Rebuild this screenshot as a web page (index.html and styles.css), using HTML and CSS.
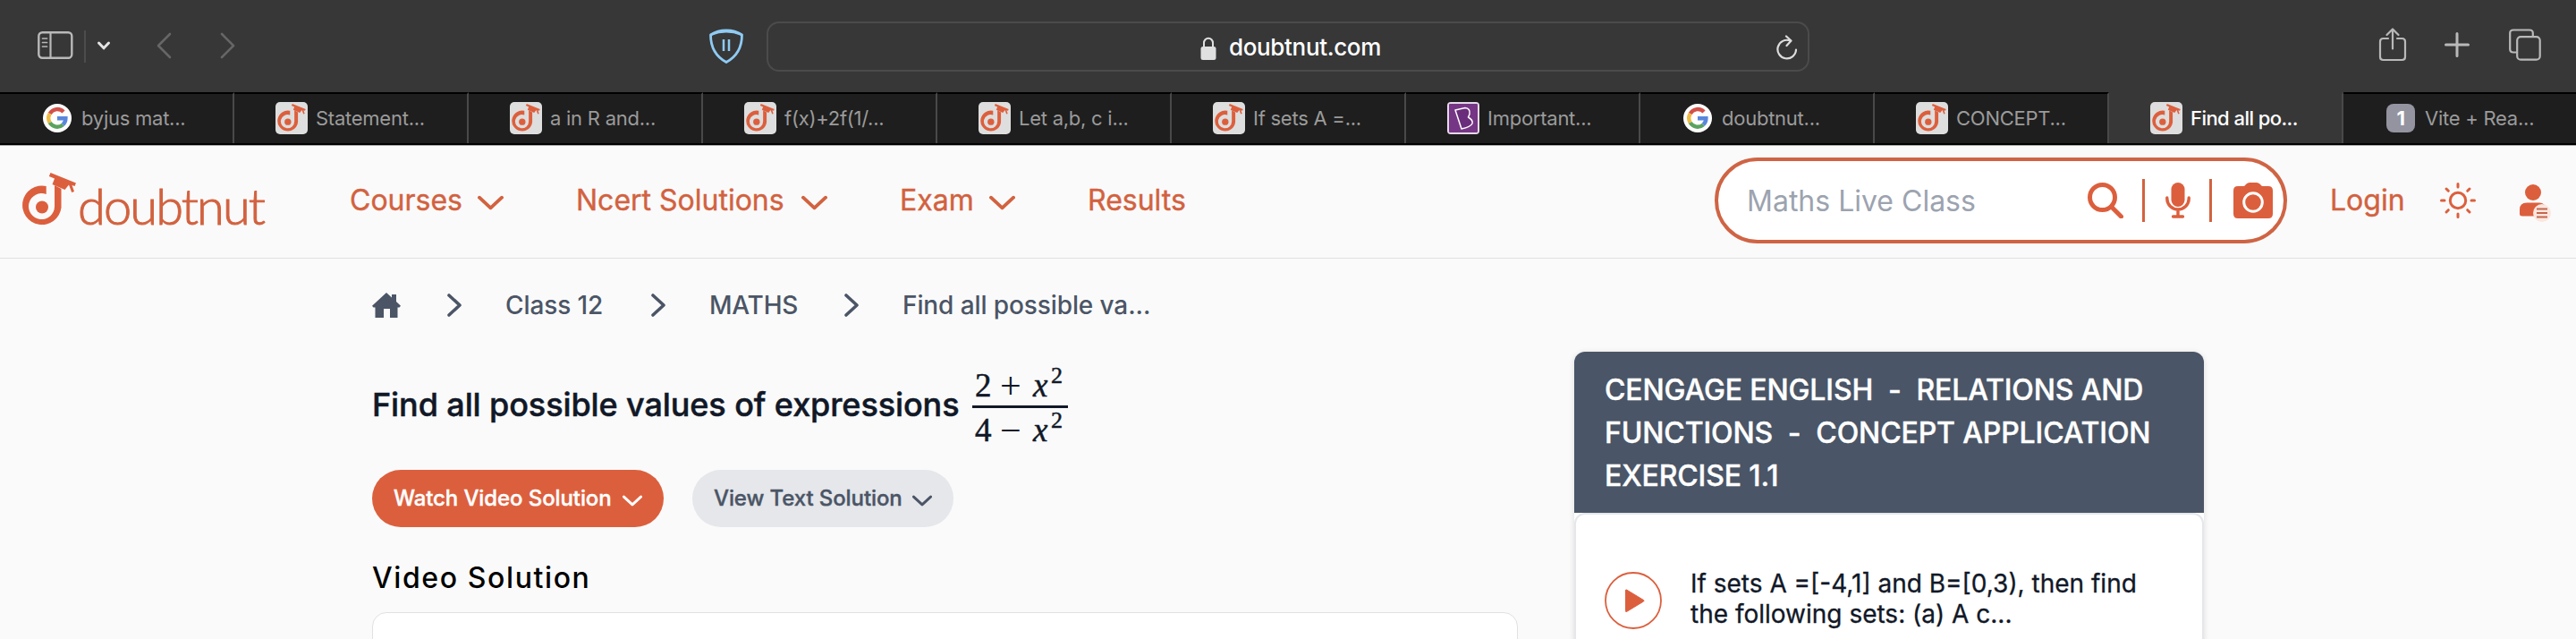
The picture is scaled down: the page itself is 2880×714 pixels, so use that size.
FILE: index.html
```
<!DOCTYPE html>
<html lang="en">
<head>
<meta charset="utf-8">
<title>Find all possible values of expressions</title>
<link rel="stylesheet" href="styles.css">
</head>
<body>
<svg class="defs" width="0" height="0" aria-hidden="true">
  <symbol id="dmark" viewBox="0 0 60 61">
    <path d="M26.700 15V24A14.500 14.500 0 1 0 36 37.500V14L43.500 18V39A21.800 21.800 0 1 1 26.700 15Z" fill="#dc5f3d"/>
    <circle cx="22" cy="38.500" r="7" fill="#dc5f3d"/>
    <path d="M31.500 0L60 11.500L58.500 15L55.500 14L58 21L55.200 22L52 13.500L47.500 19L33.500 13L36 6.500L29.800 4Z" fill="#dc5f3d"/>
  </symbol>
  <symbol id="google" viewBox="0 0 32 32">
    <circle cx="16" cy="16" r="16" fill="#fff"/>
    <g fill="none" stroke-width="4.400">
      <path d="M23 9A9.600 9.600 0 0 0 7.700 11" stroke="#d2524a"/>
      <path d="M7.700 11A9.600 9.600 0 0 0 7.700 21" stroke="#eebb45"/>
      <path d="M7.700 21A9.600 9.600 0 0 0 22.300 23.300" stroke="#5aa35f"/>
      <path d="M22.300 23.300A9.600 9.600 0 0 0 25.400 16.200H16" stroke="#5a87dc"/>
    </g>
  </symbol>
  <symbol id="down" viewBox="0 0 30 16"><path d="M2 2L15 14L28 2" fill="none" stroke="currentColor" stroke-width="4" stroke-linecap="round" stroke-linejoin="round"/></symbol>
  <symbol id="next" viewBox="0 0 16 26"><path d="M2 2L14 13L2 24" fill="none" stroke="currentColor" stroke-width="3.600" stroke-linecap="round" stroke-linejoin="round"/></symbol>
</svg>

<div class="toolbar">
  <div class="tools-left">
    <svg class="ic-sidebar" width="40" height="32" viewBox="0 0 40 32" fill="none" stroke="#b9b9b9">
      <rect x="1.300" y="1.300" width="37" height="28.500" rx="4" stroke-width="2.400"/>
      <path d="M14.500 1V30" stroke-width="2.200"/>
      <path d="M5.500 8H10.500M5.500 12.500H10.500M5.500 17H10.500" stroke-width="1.700" stroke-linecap="round"/>
    </svg>
    <span class="tool-sep"></span>
    <svg class="ic-menu" width="16" height="12" viewBox="0 0 16 12"><path d="M2.500 3L8 8.800L13.500 3" fill="none" stroke="#e4e4e4" stroke-width="3" stroke-linecap="round" stroke-linejoin="round"/></svg>
    <svg class="ic-back" width="18" height="30" viewBox="0 0 18 30"><path d="M16 2L3 15L16 28" fill="none" stroke="#666" stroke-width="2.600" stroke-linecap="round" stroke-linejoin="round"/></svg>
    <svg class="ic-fwd" width="18" height="30" viewBox="0 0 18 30"><path d="M2 2L15 15L2 28" fill="none" stroke="#666" stroke-width="2.600" stroke-linecap="round" stroke-linejoin="round"/></svg>
  </div>
  <svg class="ic-shield" width="40" height="40" viewBox="0 0 40 40" fill="none" stroke="#8fcaf3">
    <path d="M20 2Q10 2 2.500 7Q2.500 28 20 37.500Q37.500 28 37.500 7Q30 2 20 2Z" stroke-width="2.800" stroke-linejoin="round"/>
    <path d="M3 6.500Q20 0 37 6.500" stroke-width="2.500"/>
    <path d="M17 12V25M23 12V25" stroke-width="2.500"/>
  </svg>
  <div class="address">
    <svg class="ic-lock" width="18" height="26" viewBox="0 0 18 26"><path d="M4 12V7A5 5.300 0 0 1 14 7V12" fill="none" stroke="#e0e0e0" stroke-width="2"/><rect x="0.500" y="11" width="17" height="15" rx="2.500" fill="#e0e0e0"/></svg>
    <span class="host">doubtnut.com</span>
    <svg class="ic-reload" width="24" height="28" viewBox="0 0 24 28" fill="none" stroke="#dcdcdc" stroke-width="2.200" stroke-linecap="round" stroke-linejoin="round"><path d="M22 16.500A10.300 10.300 0 1 1 15.500 6.500"/><path d="M11 1.500L16.500 6.500L11.500 12"/></svg>
  </div>
  <div class="tools-right">
    <svg width="32" height="40" viewBox="0 0 32 40" fill="none" stroke="#b9b9b9" stroke-width="2.200" stroke-linecap="round" stroke-linejoin="round"><path d="M11 13H5.500Q2 13 2 16.500V33.500Q2 37 5.500 37H26.500Q30 37 30 33.500V16.500Q30 13 26.500 13H21M16 24.500V2.500M9.500 9L16 2.500L22.500 9"/></svg>
    <svg width="28" height="28" viewBox="0 0 28 28"><path d="M14 1.500V26.500M1.500 14H26.500" stroke="#b9b9b9" stroke-width="3" stroke-linecap="round"/></svg>
    <svg width="36" height="36" viewBox="0 0 36 36" fill="none" stroke="#b9b9b9" stroke-width="2.200"><rect x="9.200" y="9.200" width="25.500" height="25.500" rx="4"/><path d="M9.500 26.500H5Q1.200 26.500 1.200 23V5Q1.200 1.500 5 1.500H23Q26.800 1.500 26.800 5V9"/></svg>
  </div>
</div>

<div class="tabs">
  <div class="tab"><svg class="fav round"><use href="#google"/></svg><span>byjus mat...</span></div>
  <div class="tab"><span class="fav tile"><svg><use href="#dmark"/></svg></span><span>Statement...</span></div>
  <div class="tab"><span class="fav tile"><svg><use href="#dmark"/></svg></span><span>a in R and...</span></div>
  <div class="tab"><span class="fav tile"><svg><use href="#dmark"/></svg></span><span>f(x)+2f(1/...</span></div>
  <div class="tab"><span class="fav tile"><svg><use href="#dmark"/></svg></span><span>Let a,b, c i...</span></div>
  <div class="tab"><span class="fav tile"><svg><use href="#dmark"/></svg></span><span>If sets A =...</span></div>
  <div class="tab"><svg class="fav" viewBox="0 0 36 36"><rect width="36" height="36" rx="4" fill="#e6d9ea"/><rect x="2" y="2" width="32" height="32" rx="1" fill="#763686"/><path d="M9 9L20 6.500Q26 7 25 13.500L23.500 17Q29 20 28 24Q26 28 16 30Z" fill="#6a2d7b" stroke="#fff" stroke-width="1.500" stroke-linejoin="round"/></svg><span>Important...</span></div>
  <div class="tab"><svg class="fav round"><use href="#google"/></svg><span>doubtnut...</span></div>
  <div class="tab"><span class="fav tile"><svg><use href="#dmark"/></svg></span><span>CONCEPT...</span></div>
  <div class="tab active"><span class="fav tile"><svg><use href="#dmark"/></svg></span><span>Find all po...</span></div>
  <div class="tab"><span class="fav num">1</span><span>Vite + Rea...</span></div>
</div>

<header class="site">
  <a class="logo"><svg width="60" height="61"><use href="#dmark"/></svg><span>doubtnut</span></a>
  <nav>
    <a class="n1">Courses<svg><use href="#down"/></svg></a>
    <a class="n2">Ncert Solutions<svg><use href="#down"/></svg></a>
    <a class="n3">Exam<svg><use href="#down"/></svg></a>
    <a class="n4">Results</a>
  </nav>
  <div class="search">
    <span class="hint">Maths Live Class</span>
    <svg class="ic-search" width="40" height="40" viewBox="0 0 40 40" fill="none" stroke="#dc5f3d"><circle cx="16.500" cy="16.500" r="14" stroke-width="5"/><path d="M26.500 27L37.500 38" stroke-width="5" stroke-linecap="round"/></svg>
    <span class="bar b1"></span>
    <svg class="ic-mic" width="28" height="40" viewBox="0 0 28 40" fill="none" stroke="#dc5f3d"><rect x="6.500" y="0" width="15" height="27" rx="7.500" fill="#dc5f3d" stroke="none"/><path d="M1.800 17V18A12.200 12 0 0 0 26.200 18V17M14 30V38M8.500 38H19.500" stroke-width="3.400" stroke-linecap="round"/></svg>
    <span class="bar b2"></span>
    <svg class="ic-camera" width="44" height="40" viewBox="0 0 44 40"><path d="M5 4H12L14.500 1.500Q16 0 18 0H26Q28 0 29.500 1.500L32 4H39Q44 4 44 9V35Q44 40 39 40H5Q0 40 0 35V9Q0 4 5 4Z" fill="#dc5f3d"/><circle cx="22" cy="22" r="10.300" fill="#dc5f3d" stroke="#fff" stroke-width="3"/></svg>
  </div>
  <a class="login">Login</a>
  <svg class="ic-sun" width="40" height="40" viewBox="0 0 40 40" fill="none" stroke="#dc5f3d" stroke-width="3" stroke-linecap="round"><circle cx="20" cy="20" r="8.700"/><path d="M20 1.500V5M20 35V38.500M1.500 20H5M35 20H38.500M7 7L9.300 9.300M30.700 30.700L33 33M7 33L9.300 30.700M30.700 9.300L33 7"/></svg>
  <svg class="ic-user" width="36" height="42" viewBox="0 0 36 42"><circle cx="16" cy="9" r="9" fill="#dc5f3d"/><path d="M1 33V28Q1 20.500 9 20.500H23Q30 20.500 30 28V35.500H4Q1 35.500 1 33Z" fill="#dc5f3d"/><circle cx="26" cy="32" r="10" fill="#fbe6df"/><path d="M20 27.500H32M20 32H32M20 36.500H32" stroke="#c4674c" stroke-width="2"/></svg>
</header>

<main>
  <section class="question">
    <div class="crumbs">
      <svg class="home" width="32" height="28" viewBox="0 0 32 28"><path d="M16 0L22 5.500V2H27V10L32 14.800L30.500 16.500H28.500V28H20V18H13V28H3.500V16.500H1.500L0 14.800Z" fill="#4b5566"/></svg>
      <svg class="next"><use href="#next"/></svg><a class="c1">Class 12</a>
      <svg class="next"><use href="#next"/></svg><a class="c2">MATHS</a>
      <svg class="next"><use href="#next"/></svg><a class="c3">Find all possible va...</a>
    </div>
    <h1><span class="ask">Find all possible values of expressions</span>
      <span class="frac"><span class="num-row"><span class="digit">2</span><span class="op">+</span><i>x</i><sup>2</sup></span><span class="den-row"><span class="digit">4</span><span class="op">−</span><i>x</i><sup>2</sup></span></span>
    </h1>
    <div class="buttons">
      <a class="btn watch"><span>Watch Video Solution</span><svg><use href="#down"/></svg></a>
      <a class="btn view"><span>View Text Solution</span><svg><use href="#down"/></svg></a>
    </div>
    <h2>Video Solution</h2>
    <div class="player"></div>
  </section>
  <aside class="card">
    <div class="card-head"><div>CENGAGE ENGLISH &nbsp;-&nbsp; RELATIONS AND</div><div>FUNCTIONS &nbsp;-&nbsp; CONCEPT APPLICATION</div><div>EXERCISE 1.1</div></div>
    <div class="card-body">
      <svg width="64" height="64" viewBox="0 0 64 64"><circle cx="32" cy="32" r="31" fill="none" stroke="#dc5f3d" stroke-width="1.800"/><path d="M24.500 20L43.500 31.500Q44.500 32.300 43.500 33L24.500 44.500Q23.500 45 23.500 43.500V21Q23.500 19.500 24.500 20Z" fill="#dc5f3d" stroke="#dc5f3d"/></svg>
      <div class="item"><div>If sets A =[-4,1] and B=[0,3), then find</div><div>the following sets: (a) A c...</div></div>
    </div>
  </aside>
</main>
</body>
</html>
```
FILE: styles.css
```
* { box-sizing: border-box; }
body { margin: 0; width: 2880px; height: 714px; overflow: hidden; background: #fafafa; font-family: Inter, "Liberation Sans", sans-serif; white-space: nowrap; }
svg { display: block; flex: none; }
.defs { position: absolute; }

/* browser chrome */
.toolbar { height: 103px; background: #373737; display: flex; align-items: flex-start; }
.tools-left { display: flex; width: 792px; padding: 35px 0 0 42px; }
.tool-sep { width: 2px; height: 36px; margin: -1px 0 0 12px; background: #4c4c4c; }
.ic-menu { margin: 10px 0 0 12px; }
.ic-back { margin: 1px 0 0 50px; }
.ic-fwd { margin: 1px 0 0 54px; }
.ic-shield { margin-top: 32px; }
.address { margin: 24px 0 0 25px; width: 1166px; height: 56px; border: 2px solid #4b4b4b; border-radius: 14px; display: flex; align-items: center; padding-left: 483px; }
.ic-lock { margin-top: 3px; }
.host { margin-left: 14px; width: 612px; color: #fff; font-size: 26px; font-weight: 500; letter-spacing: -.35px; }
.ic-reload { margin-top: 1px; }
.tools-right { flex: 1; display: flex; align-items: center; height: 40px; margin-top: 30px; padding-left: 636px; }
.tools-right svg:nth-child(2) { margin-left: 42px; }
.tools-right svg:nth-child(3) { margin-left: 44px; }

.tabs { height: 59px; display: flex; background: #1e1e1e; border-bottom: 2px solid #000; box-shadow: 0 1px #aaa; position: relative; }
.tab { width: 262px; flex: none; display: flex; align-items: center; padding: 0 0 1px 46px; border-right: 2px solid #494949; border-top: 2px solid #000; color: #9b9b9b; font-size: 22px; letter-spacing: -.25px; }
.tab:last-child { border-right: 0; }
.tab.active { background: #373737; border-top-color: #373737; color: #fff; font-weight: 500; letter-spacing: -.55px; }
.fav { width: 36px; height: 36px; flex: none; margin-right: 9px; }
.fav.round, .fav.num { width: 32px; height: 32px; margin: 0 11px 0 2px; }
.fav.tile { background: #dedede; border-radius: 5px; padding: 2px; }
.fav.tile svg { width: 32px; height: 32px; }
.fav.num { background: #9494a1; border-radius: 8px; color: #fff; font-weight: 700; text-align: center; line-height: 33px; }

/* site header */
.site { height: 127px; padding-top: 1px; display: flex; align-items: flex-start; color: #d2623f; font-size: 32px; border-bottom: 1px solid #dfe1e6; }
.logo { display: flex; width: 391px; padding: 30px 0 0 25px; }
.logo span { font: 300 56px/61px Lato, sans-serif; letter-spacing: -1.900px; margin: 6px 0 0 2px; -webkit-text-stroke: 1px #d2623f; }
nav { display: flex; width: 1526px; padding-top: 41px; line-height: 40px; -webkit-text-stroke: .4px #d2623f; }
nav a { display: flex; justify-content: space-between; }
nav a svg { width: 29px; height: 17px; margin-top: 14px; }
.n1 { width: 172px; }
.n2 { width: 281px; margin-left: 81px; }
.n3 { width: 129px; margin-left: 81px; }
.n4 { margin-left: 81px; }
.search { width: 640px; height: 96px; margin-top: 13px; background: #fff; border: 4px solid #cf6444; border-radius: 48px; display: flex; align-items: center; padding-left: 32px; }
.hint { width: 381px; color: #9ca3af; }
.bar { width: 3px; height: 48px; background: #d2623f; }
.b1 { margin-left: 21px; }
.b2 { margin-left: 21px; }
.ic-mic { margin-left: 23px; }
.ic-camera { margin-left: 24px; }
.login { margin: 41px 0 0 48px; width: 123px; line-height: 40px; -webkit-text-stroke: .4px #d2623f; }
.ic-sun { margin-top: 41px; }
.ic-user { margin: 43px 0 0 48px; }

/* page */
main { display: flex; align-items: flex-start; height: 425px; overflow: hidden; padding-left: 416px; }
.question { width: 1344px; }
.crumbs { display: flex; align-items: center; height: 40px; margin-top: 32px; color: #4b5566; font-size: 28px; font-weight: 500; }
.crumbs .home { margin-right: 52px; }
.next { width: 16px; height: 26px; margin-right: 49px; }
.c1 { width: 163px; letter-spacing: -.1px; }
.c2 { width: 151px; letter-spacing: -.2px; }
.c3 { letter-spacing: -.1px; }
h1 { display: flex; align-items: flex-start; height: 140px; margin: 0; padding-top: 48px; color: #111827; font-size: 36px; font-weight: 500; line-height: 44px; -webkit-text-stroke: .5px #111827; }
.ask { width: 671px; padding-top: 21px; letter-spacing: -.1px; }
.frac { width: 107px; display: block; font: 37px/40px "Liberation Serif", serif; }
.num-row, .den-row { display: flex; padding-left: 3px; height: 47px; }
.num-row { border-bottom: 3px solid #111827; padding-top: 2px; }
.den-row { padding-top: 5px; }
.digit { width: 28px; }
.op { width: 37px; font-size: 42px; -webkit-text-stroke: 0; }
.frac i { width: 20px; }
.frac sup { font-size: 26px; line-height: 26px; margin-top: -4px; }
.buttons { display: flex; gap: 32px; margin-top: 24px; }
.btn { height: 64px; border-radius: 32px; display: flex; align-items: center; padding: 0 24px; justify-content: space-between; font-size: 24px; font-weight: 500; -webkit-text-stroke: .4px currentColor; }
.btn span { letter-spacing: -.1px; margin-top: -1px; }
.btn svg { width: 22px; height: 13px; margin-top: 4px; }
.watch { width: 326px; background: #dc5f3d; color: #fff; }
.view { width: 292px; background: #e5e7eb; color: #4b5566; }
h2 { margin: 37px 0 0; font-size: 32px; line-height: 40px; font-weight: 500; letter-spacing: 1.600px; color: #000; }
.player { width: 1281px; height: 60px; margin-top: 18px; background: #fff; border: 1px solid #dfe1e4; border-radius: 16px; }

.card { width: 704px; height: 400px; margin-top: 104px; background: #fff; border-radius: 12px; box-shadow: 0 1px 6px rgba(0,0,0,.13); }
.card-head { height: 180px; padding: 19px 34px; background: #4a5567; border-radius: 12px 12px 0 0; color: #fff; font-size: 32px; line-height: 48px; font-weight: 500; letter-spacing: -.13px; -webkit-text-stroke: .4px #fff; }
.card-body { height: 220px; border: 2px solid #e5e7eb; border-radius: 12px; display: flex; padding: 64px 0 0 32px; }
.item { margin: -4px 0 0 32px; color: #111827; font-size: 28px; line-height: 34px; -webkit-text-stroke: .3px #111827; }
```
